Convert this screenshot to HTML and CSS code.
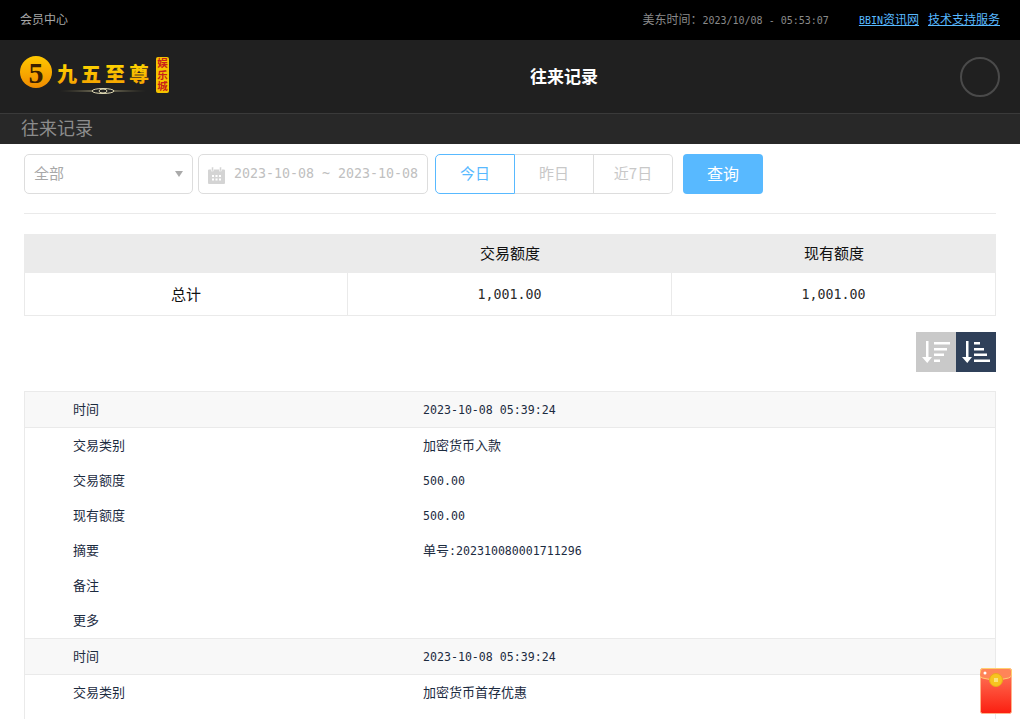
FILE: index.html
```html
<!DOCTYPE html>
<html lang="zh-CN">
<head>
<meta charset="utf-8">
<title>往来记录</title>
<link rel="stylesheet" href="styles.css">
</head>
<body>
<div class="topbar">
  <span class="member">会员中心</span>
  <div class="top-right">
    <span class="clock">美东时间：<span class="clock-time">2023/10/08 - 05:53:07</span></span>
    <a class="toplink" href="#"><span class="clock-time">BBIN</span>资讯网</a>
    <a class="toplink" href="#">技术支持服务</a>
  </div>
</div>
<header class="header">
  <svg class="logo" width="150" height="40" viewBox="0 0 150 40">
    <defs>
      <linearGradient id="gold" x1="0" y1="0" x2="0" y2="1">
        <stop offset="0" stop-color="#ffe100"/>
        <stop offset="1" stop-color="#f59a00"/>
      </linearGradient>
      <linearGradient id="coin" x1="0" y1="0" x2="0" y2="1">
        <stop offset="0" stop-color="#ffc800"/>
        <stop offset="1" stop-color="#f08c00"/>
      </linearGradient>
      <linearGradient id="rule" x1="0" y1="0" x2="1" y2="0">
        <stop offset="0" stop-color="#6b6440" stop-opacity="0"/>
        <stop offset=".4" stop-color="#b8b088"/>
        <stop offset=".6" stop-color="#b8b088"/>
        <stop offset="1" stop-color="#6b6440" stop-opacity="0"/>
      </linearGradient>
    </defs>
    <circle cx="16" cy="16" r="16" fill="url(#coin)"/>
    <text x="16" y="27" class="logo-five">5</text>
    <text x="37" y="26" class="logo-name" fill="url(#gold)">九五至尊</text>
    <rect x="40" y="34.500" width="86" height="1" fill="url(#rule)"/>
    <ellipse cx="83" cy="35" rx="11" ry="2.500" fill="#202020" stroke="#e0dab4"/>
    <ellipse cx="83" cy="35" rx="4" ry="2" fill="none" stroke="#e0dab4"/>
    <rect x="136" y="1" width="13" height="36" rx="2" fill="#f5c400"/>
    <text class="logo-tag" x="142.500" y="2">娱乐城</text>
  </svg>
  <h1 class="title">往来记录</h1>
  <div class="avatar"></div>
</header>
<div class="subhead">往来记录</div>
<main class="content">
  <form class="filter">
    <div class="select">
      <span class="cjk-up">全部</span>
      <span class="caret"></span>
    </div>
    <div class="daterange">
      <svg class="cal" width="17" height="17" viewBox="0 0 17 17">
        <path d="M0 3.500a1 1 0 0 1 1-1h15a1 1 0 0 1 1 1V16a1 1 0 0 1-1 1H1a1 1 0 0 1-1-1z" fill="#d4d4d4"/>
        <rect x="3.500" y="0" width="2" height="4" fill="#d4d4d4" stroke="#fff" stroke-width=".5"/>
        <rect x="11.500" y="0" width="2" height="4" fill="#d4d4d4" stroke="#fff" stroke-width=".5"/>
        <path d="M4 8h2v2H4zM7.500 8h2v2h-2zM11 8h2v2h-2zM4 11.500h2v2H4zM7.500 11.500h2v2h-2zM11 11.500h2v2h-2z" fill="#fff"/>
      </svg>
      <span class="dates">2023-10-08 ~ 2023-10-08</span>
    </div>
    <div class="quick">
      <span class="quick-item active">今日</span>
      <span class="quick-item">昨日</span>
      <span class="quick-item">近7日</span>
    </div>
    <span class="search">查询</span>
  </form>
  <table class="summary">
    <tr class="summary-head"><th></th><th>交易额度</th><th>现有额度</th></tr>
    <tr><td>总计</td><td class="num">1,001.00</td><td class="num">1,001.00</td></tr>
  </table>
  <div class="sort">
    <span class="sort-btn">
      <svg width="30" height="24" viewBox="0 0 30 24"><path d="M5 1h2.500v16H11l-4.750 6L1 17h4z" fill="#fff"/><path d="M13 2h16v2.500H13zM13 8h13v2.500H13zM13 13.500h10V16H13zM13 19.500h6V22h-6z" fill="#fff"/></svg>
    </span>
    <span class="sort-btn current">
      <svg width="30" height="24" viewBox="0 0 30 24"><path d="M5 1h2.500v16H11l-4.750 6L1 17h4z" fill="#fff"/><path d="M13 2h6v2.500h-6zM13 8h10v2.500H13zM13 13.500h13V16H13zM13 19.500h16V22H13z" fill="#fff"/></svg>
    </span>
  </div>
  <section class="records">
    <div class="rec-row rec-head"><span class="k">时间</span><span class="mono">2023-10-08 05:39:24</span></div>
    <div class="rec-row"><span class="k">交易类别</span><span class="v">加密货币入款</span></div>
    <div class="rec-row"><span class="k">交易额度</span><span class="mono">500.00</span></div>
    <div class="rec-row"><span class="k">现有额度</span><span class="mono">500.00</span></div>
    <div class="rec-row"><span class="k">摘要</span><span class="v">单号<span class="mono">:202310080001711296</span></span></div>
    <div class="rec-row"><span class="k">备注</span><span class="v"></span></div>
    <div class="rec-row rec-last"><span class="k">更多</span><span class="v"></span></div>
    <div class="rec-row rec-head"><span class="k">时间</span><span class="mono">2023-10-08 05:39:24</span></div>
    <div class="rec-row"><span class="k">交易类别</span><span class="v">加密货币首存优惠</span></div>
  </section>
</main>
<div class="redpacket">
  <svg width="32" height="46" viewBox="0 0 32 46">
    <defs>
      <linearGradient id="rp" x1="0" y1="0" x2="0" y2="1">
        <stop offset="0" stop-color="#ff7a5c"/>
        <stop offset="1" stop-color="#fb1e10"/>
      </linearGradient>
    </defs>
    <rect x="0.500" y="0.500" width="31" height="45" rx="2" fill="url(#rp)" stroke="#ffb38a"/>
    <path d="M.5 3a2.500 2.500 0 0 1 2.500-2.500h26a2.500 2.500 0 0 1 2.500 2.500v4q0 2-3 3-13 3.500-26 0-3-1-3-3z" fill="#ff8458" stroke="#ffcf70"/>
    <circle cx="16" cy="12" r="6.500" fill="#f6c520" stroke="#eba91a"/>
    <rect x="14" y="10" width="4" height="4" fill="#fbe27a"/>
    <circle cx="5" cy="5" r="1.500" fill="#fff"/>
  </svg>
</div>
</body>
</html>
```
FILE: styles.css
```css
* { box-sizing: border-box; }
html, body { margin: 0; height: 100%; overflow: hidden; }
body {
  font-family: "Noto Sans CJK SC", "Liberation Sans", sans-serif;
  font-size: 13px;
  color: #1c2b3f;
  background: #fff;
}
.mono { font-family: "DejaVu Sans Mono", "Noto Sans CJK SC", monospace; font-size: 11.6px; }

.topbar {
  height: 40px;
  background: #000;
  color: #8a8a8a;
  font-size: 12px;
  display: flex;
  align-items: center;
  justify-content: space-between;
  padding: 0 20px 3px;
}
.member { color: #a8a8a8; }
.top-right { display: flex; align-items: baseline; }
.clock { margin-right: 21px; }
.clock-time { font-family: "DejaVu Sans Mono", monospace; font-size: 10px; }
.toplink { color: #58b9ff; text-decoration: underline; margin-left: 9px; }

.header {
  height: 74px;
  background: #202020;
  border-bottom: 1px solid #3a3a3a;
  display: flex;
  align-items: center;
  justify-content: space-between;
  padding: 0 20px;
  position: relative;
}
.logo { display: block; margin-top: -1px; }
.logo-five { font: 700 30px "Liberation Serif", serif; fill: #3a2000; text-anchor: middle; }
.logo-name { font: 900 20px "Noto Sans CJK SC", sans-serif; letter-spacing: 4px; }
.logo-tag { font: 700 10.500px "Noto Sans CJK SC", sans-serif; fill: #c8201a; writing-mode: vertical-rl; letter-spacing: 1px; }
.title {
  margin: 0;
  position: absolute;
  left: 0;
  right: 0;
  padding: 0 0 2px 108px;
  text-align: center;
  font-size: 17px;
  font-weight: 700;
  color: #fff;
}
.avatar { width: 40px; height: 40px; border: 2px solid #4a4a4a; border-radius: 50%; }

.subhead {
  height: 30px;
  line-height: 27px;
  background: #282828;
  color: #8c8c8c;
  font-size: 18px;
  padding-left: 21px;
}

.content { padding: 10px 24px 0; }
.filter {
  display: flex;
  align-items: stretch;
  height: 40px;
  color: #a8a8a8;
  font-size: 15px;
}
.cjk-up { margin-bottom: 3px; }
.select {
  width: 169px;
  border: 1px solid #ddd;
  border-radius: 5px;
  display: flex;
  align-items: center;
  justify-content: space-between;
  padding: 0 9px;
}
.caret { width: 0; height: 0; border: 4px solid transparent; border-top: 6px solid #aaa; border-bottom: 0; }
.daterange {
  width: 230px;
  margin-left: 5px;
  border: 1px solid #ddd;
  border-radius: 5px;
  display: flex;
  align-items: center;
  gap: 9px;
  padding-left: 9px;
  white-space: nowrap;
}
.cal { flex: none; margin-top: 2px; }
.dates { font-family: "DejaVu Sans Mono", monospace; font-size: 13.3px; color: #c0c0c0; margin-bottom: 1px; }
.quick { display: flex; margin-left: 7px; width: 238px; }
.quick-item {
  flex: 1;
  border: 1px solid #ddd;
  border-left-width: 0;
  display: flex;
  align-items: center;
  justify-content: center;
  padding-bottom: 3px;
  color: #c8c8c8;
}
.quick-item:last-child { border-radius: 0 5px 5px 0; }
.quick-item.active {
  border: 1px solid #58b9ff;
  border-radius: 5px 0 0 5px;
  color: #58b9ff;
}
.search {
  width: 80px;
  margin-left: 10px;
  background: #58b9ff;
  color: #fff;
  border-radius: 4px;
  font-size: 16px;
  display: flex;
  align-items: center;
  justify-content: center;
  padding-bottom: 2px;
}

.summary {
  width: 100%;
  margin-top: 19px;
  border-top: 1px solid #eaeaea;
  border-collapse: separate;
  border-spacing: 0;
  padding-top: 20px;
  table-layout: fixed;
  font-size: 15px;
  color: #111;
  text-align: center;
}
.summary th { height: 39px; background: #ebebeb; font-weight: 400; padding-bottom: 3px; }
.summary td {
  height: 43px;
  border-bottom: 1px solid #eaeaea;
  border-right: 1px solid #eaeaea;
  padding-bottom: 3px;
}
.summary td:first-child { border-left: 1px solid #eaeaea; }
.summary td.num { font-family: "DejaVu Sans Mono", monospace; font-size: 13.3px; padding-bottom: 0; color: #2a2a2a; }

.sort { display: flex; justify-content: flex-end; margin-top: 16px; }
.sort-btn { width: 40px; height: 40px; background: #c9c9c9; display: flex; align-items: center; justify-content: center; }
.sort-btn.current { background: #2f4059; }

.records { margin-top: 19px; border: 1px solid #eaeaea; border-bottom: 0; padding-bottom: 40px; }
.rec-row { display: flex; height: 35px; align-items: center; padding-left: 48px; font-size: 13px; }
.rec-head { height: 36px; background: #f8f8f8; border-bottom: 1px solid #eaeaea; }
.rec-last { height: 36px; border-bottom: 1px solid #eaeaea; }
.k { width: 350px; flex: none; margin-bottom: 2px; }
.v { margin-bottom: 2px; }

.redpacket { position: fixed; left: 980px; top: 668px; width: 32px; height: 46px; }
.redpacket svg { display: block; }
```
